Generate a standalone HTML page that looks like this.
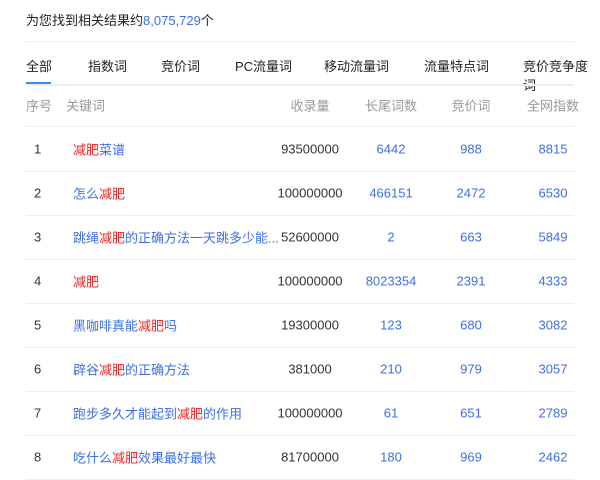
<!DOCTYPE html>
<html><head><meta charset="utf-8"><style>
body{margin:0;background:#fff;font-family:"Liberation Sans","Noto Sans CJK SC",sans-serif;font-size:13px;color:#333;width:600px;height:479px;overflow:hidden;position:relative}
.top{position:absolute;left:26px;top:10px;font-size:13px;color:#222}
.b{color:#3c6fe6}.r{color:#f21f1f}
.hl{position:absolute;left:26px;width:548px;height:1px;background:#eee}
.tab{position:absolute;top:56px;font-size:13px;color:#222}
.ul{position:absolute;left:26px;top:82px;width:25px;height:2px;background:#3c8cf0}
.row{position:absolute;left:26px;width:548px;height:44px;border-bottom:1px solid #eee}
.row span{position:absolute;top:50%;transform:translateY(-50%);white-space:nowrap}
.c1{left:8px}.c2{left:47px}.c3{left:284px;width:0;text-align:center}
.c3,.c4,.c5,.c6{display:flex;justify-content:center}
.c3{left:284px}.c4{left:365px}.c5{left:445px}.c6{left:527px}
.c3,.c4,.c5,.c6{width:0}
.hd{color:#999}
.n{color:#3c6fe6}
</style></head><body>
<div class="top">为您找到相关结果约<span class="b">8,075,729</span>个</div>
<div class="hl" style="top:41px"></div>
<div class="tab" style="left:26px">全部</div>
<div class="tab" style="left:88px">指数词</div>
<div class="tab" style="left:161px">竞价词</div>
<div class="tab" style="left:235px">PC流量词</div>
<div class="tab" style="left:324px">移动流量词</div>
<div class="tab" style="left:424px">流量特点词</div>
<div class="tab" style="left:523px">竞价竞争度词</div>
<div class="hl" style="top:84px;height:2px"></div>
<div class="ul"></div>
<div class="row hd" style="top:84px;height:42px"><span style="left:0">序号</span><span style="left:40px">关键词</span><span class="c3">收录量</span><span class="c4">长尾词数</span><span class="c5">竞价词</span><span class="c6">全网指数</span></div>
<div class="row" style="top:127px"><span class="c1">1</span><span class="c2 b"><i class="r" style="font-style:normal">减肥</i>菜谱</span><span class="c3">93500000</span><span class="c4 n">6442</span><span class="c5 n">988</span><span class="c6 n">8815</span></div>
<div class="row" style="top:171px"><span class="c1">2</span><span class="c2 b">怎么<i class="r" style="font-style:normal">减肥</i></span><span class="c3">100000000</span><span class="c4 n">466151</span><span class="c5 n">2472</span><span class="c6 n">6530</span></div>
<div class="row" style="top:215px"><span class="c1">3</span><span class="c2 b">跳绳<i class="r" style="font-style:normal">减肥</i>的正确方法一天跳多少能...</span><span class="c3">52600000</span><span class="c4 n">2</span><span class="c5 n">663</span><span class="c6 n">5849</span></div>
<div class="row" style="top:259px"><span class="c1">4</span><span class="c2 b"><i class="r" style="font-style:normal">减肥</i></span><span class="c3">100000000</span><span class="c4 n">8023354</span><span class="c5 n">2391</span><span class="c6 n">4333</span></div>
<div class="row" style="top:303px"><span class="c1">5</span><span class="c2 b">黑咖啡真能<i class="r" style="font-style:normal">减肥</i>吗</span><span class="c3">19300000</span><span class="c4 n">123</span><span class="c5 n">680</span><span class="c6 n">3082</span></div>
<div class="row" style="top:347px"><span class="c1">6</span><span class="c2 b">辟谷<i class="r" style="font-style:normal">减肥</i>的正确方法</span><span class="c3">381000</span><span class="c4 n">210</span><span class="c5 n">979</span><span class="c6 n">3057</span></div>
<div class="row" style="top:391px"><span class="c1">7</span><span class="c2 b">跑步多久才能起到<i class="r" style="font-style:normal">减肥</i>的作用</span><span class="c3">100000000</span><span class="c4 n">61</span><span class="c5 n">651</span><span class="c6 n">2789</span></div>
<div class="row" style="top:435px"><span class="c1">8</span><span class="c2 b">吃什么<i class="r" style="font-style:normal">减肥</i>效果最好最快</span><span class="c3">81700000</span><span class="c4 n">180</span><span class="c5 n">969</span><span class="c6 n">2462</span></div>
</body></html>
